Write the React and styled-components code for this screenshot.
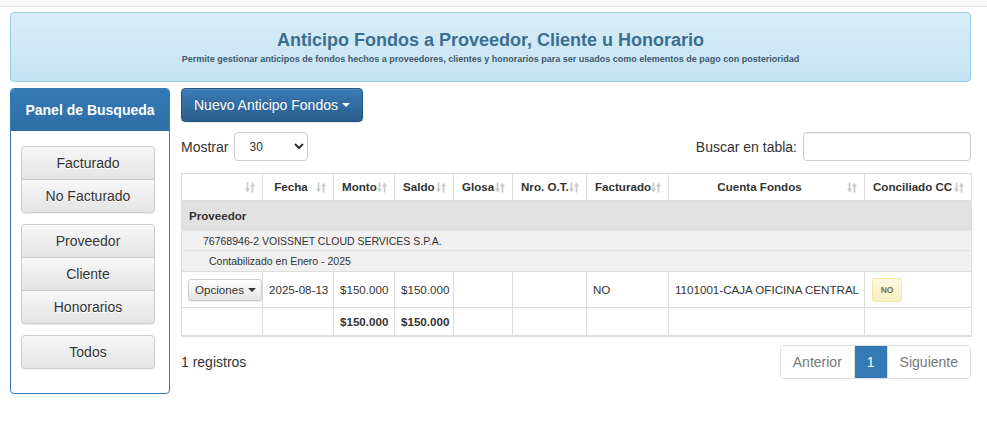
import styled, { createGlobalStyle } from "styled-components";

const GlobalStyle = createGlobalStyle`
  body {
    margin: 0;
    font-family: "Liberation Sans", Arial, sans-serif;
    font-size: 14px;
    color: #333;
    background: #fff;
  }
  * { box-sizing: border-box; }
`;

const columns = [
  { label: "", width: 81 },
  { label: "Fecha", width: 71 },
  { label: "Monto", width: 61 },
  { label: "Saldo", width: 59 },
  { label: "Glosa", width: 59 },
  { label: "Nro. O.T.", width: 74 },
  { label: "Facturado", width: 82 },
  { label: "Cuenta Fondos", width: 196 },
  { label: "Conciliado CC", width: 107 },
];

const SortIcon = () => (
  <svg width="10" height="11" viewBox="0 0 10 11">
    <path d="M2.5 0.5v7" stroke="#c9c9c9" strokeWidth="1.7" />
    <path d="M0 6.5h5l-2.5 4z" fill="#c9c9c9" />
    <path d="M7.5 3.5v7" stroke="#c9c9c9" strokeWidth="1.7" />
    <path d="M5 4.5h5l-2.5-4z" fill="#c9c9c9" />
  </svg>
);

const Root = () => {
  return (
    <Page>
      <GlobalStyle />
      <TopBar />
      <Content>
        <Banner>
          <BannerTitle>Anticipo Fondos a Proveedor, Cliente u Honorario</BannerTitle>
          <BannerSub>
            Permite gestionar anticipos de fondos hechos a proveedores, clientes y honorarios para
            ser usados como elementos de pago con posterioridad
          </BannerSub>
        </Banner>

        <Layout>
          <Sidebar>
            <PanelHeading>Panel de Busqueda</PanelHeading>
            <PanelBody>
              <BtnGroup>
                <GroupButton>Facturado</GroupButton>
                <GroupButton>No Facturado</GroupButton>
              </BtnGroup>
              <BtnGroup>
                <GroupButton>Proveedor</GroupButton>
                <GroupButton>Cliente</GroupButton>
                <GroupButton>Honorarios</GroupButton>
              </BtnGroup>
              <BtnGroup>
                <GroupButton>Todos</GroupButton>
              </BtnGroup>
            </PanelBody>
          </Sidebar>

          <Main>
            <div>
              <PrimaryButton>
                Nuevo Anticipo Fondos <Caret $color="#fff" />
              </PrimaryButton>
            </div>

            <Controls>
              <FieldLabel>
                Mostrar
                <Select defaultValue="30">
                  <option>10</option>
                  <option>30</option>
                  <option>50</option>
                </Select>
              </FieldLabel>
              <FieldLabel>
                Buscar en tabla:
                <SearchInput />
              </FieldLabel>
            </Controls>

            <Table>
              <colgroup>
                {columns.map((c, i) => (
                  <col key={i} style={{ width: c.width }} />
                ))}
              </colgroup>
              <thead>
                <tr>
                  {columns.map((c, i) => (
                    <Th key={i}>
                      {c.label}
                      <SortWrap>
                        <SortIcon />
                      </SortWrap>
                    </Th>
                  ))}
                </tr>
              </thead>
              <tbody>
                <GroupRow>
                  <td colSpan={9}>Proveedor</td>
                </GroupRow>
                <SubRow $indent={21} $h={20}>
                  <td colSpan={9}>76768946-2 VOISSNET CLOUD SERVICES S.P.A.</td>
                </SubRow>
                <SubRow $indent={27} $h={21}>
                  <td colSpan={9}>Contabilizado en Enero - 2025</td>
                </SubRow>
                <DataRow>
                  <Td>
                    <SmallButton>
                      Opciones <Caret $color="#333" />
                    </SmallButton>
                  </Td>
                  <Td>2025-08-13</Td>
                  <Td>$150.000</Td>
                  <Td>$150.000</Td>
                  <Td />
                  <Td />
                  <Td>NO</Td>
                  <Td>1101001-CAJA OFICINA CENTRAL</Td>
                  <Td>
                    <WarnBadge>NO</WarnBadge>
                  </Td>
                </DataRow>
                <TotalRow>
                  <Td />
                  <Td />
                  <Td $bold>$150.000</Td>
                  <Td $bold>$150.000</Td>
                  <Td />
                  <Td />
                  <Td />
                  <Td />
                  <Td />
                </TotalRow>
              </tbody>
            </Table>

            <Footer>
              <span>1 registros</span>
              <Pagination>
                <PageItem>Anterior</PageItem>
                <PageItem $active>1</PageItem>
                <PageItem>Siguiente</PageItem>
              </Pagination>
            </Footer>
          </Main>
        </Layout>
      </Content>
    </Page>
  );
};

const Page = styled.div`
  width: 987px;
  min-height: 436px;
`;

const TopBar = styled.div`
  height: 7px;
  background: #f8f8f8;
  border-bottom: 1px solid #e7e7e7;
`;

const Content = styled.div`
  padding: 5px 16px 0 10px;
`;

const Banner = styled.div`
  height: 70px;
  border: 1px solid #9acfea;
  border-radius: 4px;
  background: linear-gradient(to bottom, #d9edf7 0, #c4e3f3 100%);
  text-align: center;
  padding-top: 17px;
  color: #3c6e90;
`;

const BannerTitle = styled.div`
  font-size: 18px;
  font-weight: bold;
  line-height: 20px;
`;

const BannerSub = styled.div`
  font-size: 9px;
  font-weight: bold;
  line-height: 11px;
  margin-top: 4px;
  color: #3f5a6e;
`;

const Layout = styled.div`
  display: flex;
  gap: 11px;
  margin-top: 6px;
`;

const Sidebar = styled.div`
  width: 160px;
  height: 306px;
  border: 1px solid #337ab7;
  border-radius: 4px;
  overflow: hidden;
  flex-shrink: 0;
`;

const PanelHeading = styled.div`
  height: 42px;
  background: linear-gradient(to bottom, #337ab7 0, #2e6da4 100%);
  color: #fff;
  font-weight: bold;
  font-size: 14px;
  display: flex;
  align-items: center;
  justify-content: center;
`;

const PanelBody = styled.div`
  display: flex;
  flex-direction: column;
  gap: 11px;
  padding: 15px 0 0 10px;
`;

const BtnGroup = styled.div`
  display: flex;
  flex-direction: column;
  width: 134px;
  border-radius: 4px;
  box-shadow: 0 1px 1px rgba(0, 0, 0, 0.075);

  & > button + button {
    margin-top: -1px;
  }
  & > button:first-child {
    border-top-left-radius: 4px;
    border-top-right-radius: 4px;
  }
  & > button:last-child {
    border-bottom-left-radius: 4px;
    border-bottom-right-radius: 4px;
  }
`;

const GroupButton = styled.button`
  height: 34px;
  border: 1px solid #ccc;
  border-radius: 0;
  background: linear-gradient(to bottom, #f7f7f7 0, #e4e4e4 100%);
  font-family: inherit;
  font-size: 14px;
  color: #333;
  text-shadow: 0 1px 0 #fff;
  padding: 0;
`;

const Main = styled.div`
  width: 790px;
  display: flex;
  flex-direction: column;
`;

const PrimaryButton = styled.button`
  height: 34px;
  width: 182px;
  padding: 0 12px;
  border: 1px solid #245580;
  border-radius: 4px;
  background: linear-gradient(to bottom, #3a7bb5 0, #2a5d8e 100%);
  color: #fff;
  font-family: inherit;
  font-size: 14px;
  text-shadow: 0 -1px 0 rgba(0, 0, 0, 0.2);
  box-shadow: inset 0 1px 0 rgba(255, 255, 255, 0.15), 0 1px 1px rgba(0, 0, 0, 0.075);
  display: inline-flex;
  align-items: center;
  gap: 4px;
`;

const Caret = styled.span`
  display: inline-block;
  width: 0;
  height: 0;
  border-top: 4px solid ${(p) => p.$color};
  border-left: 4px solid transparent;
  border-right: 4px solid transparent;
`;

const Controls = styled.div`
  display: flex;
  justify-content: space-between;
  align-items: center;
  margin-top: 10px;
  height: 29px;
`;

const FieldLabel = styled.label`
  display: flex;
  align-items: center;
  gap: 6px;
  font-size: 14px;
`;

const Select = styled.select`
  width: 74px;
  height: 29px;
  border: 1px solid #ccc;
  border-radius: 4px;
  background: #fff;
  font-family: inherit;
  font-size: 12px;
  color: #333;
  padding: 0 6px 0 10px;
`;

const SearchInput = styled.input`
  width: 168px;
  height: 29px;
  border: 1px solid #ccc;
  border-radius: 4px;
  box-shadow: inset 0 1px 1px rgba(0, 0, 0, 0.075);
`;

const Table = styled.table`
  margin-top: 12px;
  width: 790px;
  table-layout: fixed;
  border-collapse: collapse;
  border: 1px solid #ddd;
  border-bottom: 2px solid #ddd;
  font-size: 11.6px;
`;

const Th = styled.th`
  position: relative;
  height: 27px;
  padding: 0 22px 0 8px;
  border: 1px solid #ddd;
  border-bottom: 2px solid #ddd;
  font-weight: bold;
  text-align: center;
  white-space: nowrap;
`;

const SortWrap = styled.span`
  position: absolute;
  right: 7px;
  top: 8px;
  display: flex;
`;

const GroupRow = styled.tr`
  td {
    height: 30px;
    background: #e1e1e1;
    font-weight: bold;
    padding: 0 7px;
  }
`;

const SubRow = styled.tr`
  td {
    height: ${(p) => p.$h}px;
    background: #f0f0f0;
    font-size: 10.5px;
    padding: 0 0 0 ${(p) => p.$indent}px;
    border-top: 1px solid #e2e2e2;
  }
`;

const DataRow = styled.tr`
  td {
    height: 36px;
  }
`;

const TotalRow = styled.tr`
  td {
    height: 28px;
  }
`;

const Td = styled.td`
  border: 1px solid #ddd;
  padding: 0 6px;
  white-space: nowrap;
  font-weight: ${(p) => (p.$bold ? "bold" : "normal")};
`;

const SmallButton = styled.button`
  height: 22px;
  padding: 0 5px 0 6px;
  border: 1px solid #ccc;
  border-radius: 3px;
  background: linear-gradient(to bottom, #fff 0, #e3e3e3 100%);
  font-family: inherit;
  font-size: 11.6px;
  color: #333;
  display: inline-flex;
  align-items: center;
  gap: 4px;
  box-shadow: 0 1px 1px rgba(0, 0, 0, 0.075);
`;

const WarnBadge = styled.span`
  display: inline-flex;
  align-items: center;
  justify-content: center;
  width: 30px;
  height: 24px;
  margin-left: 1px;
  border: 1px solid #f5e79e;
  border-radius: 3px;
  background: linear-gradient(to bottom, #fcf8e3 0, #f8efc0 100%);
  font-size: 8.5px;
  font-weight: bold;
  color: #7d6d45;
`;

const Footer = styled.div`
  display: flex;
  justify-content: space-between;
  align-items: center;
  margin-top: 8px;
  font-size: 14px;
`;

const Pagination = styled.div`
  display: flex;
  border: 1px solid #ddd;
  border-radius: 4px;
  overflow: hidden;
  height: 34px;
`;

const PageItem = styled.span`
  display: flex;
  align-items: center;
  padding: 0 12px;
  font-size: 14px;
  color: ${(p) => (p.$active ? "#fff" : "#777")};
  background: ${(p) => (p.$active ? "#337ab7" : "#fff")};
  & + & {
    border-left: 1px solid #ddd;
  }
`;

export default Root;
